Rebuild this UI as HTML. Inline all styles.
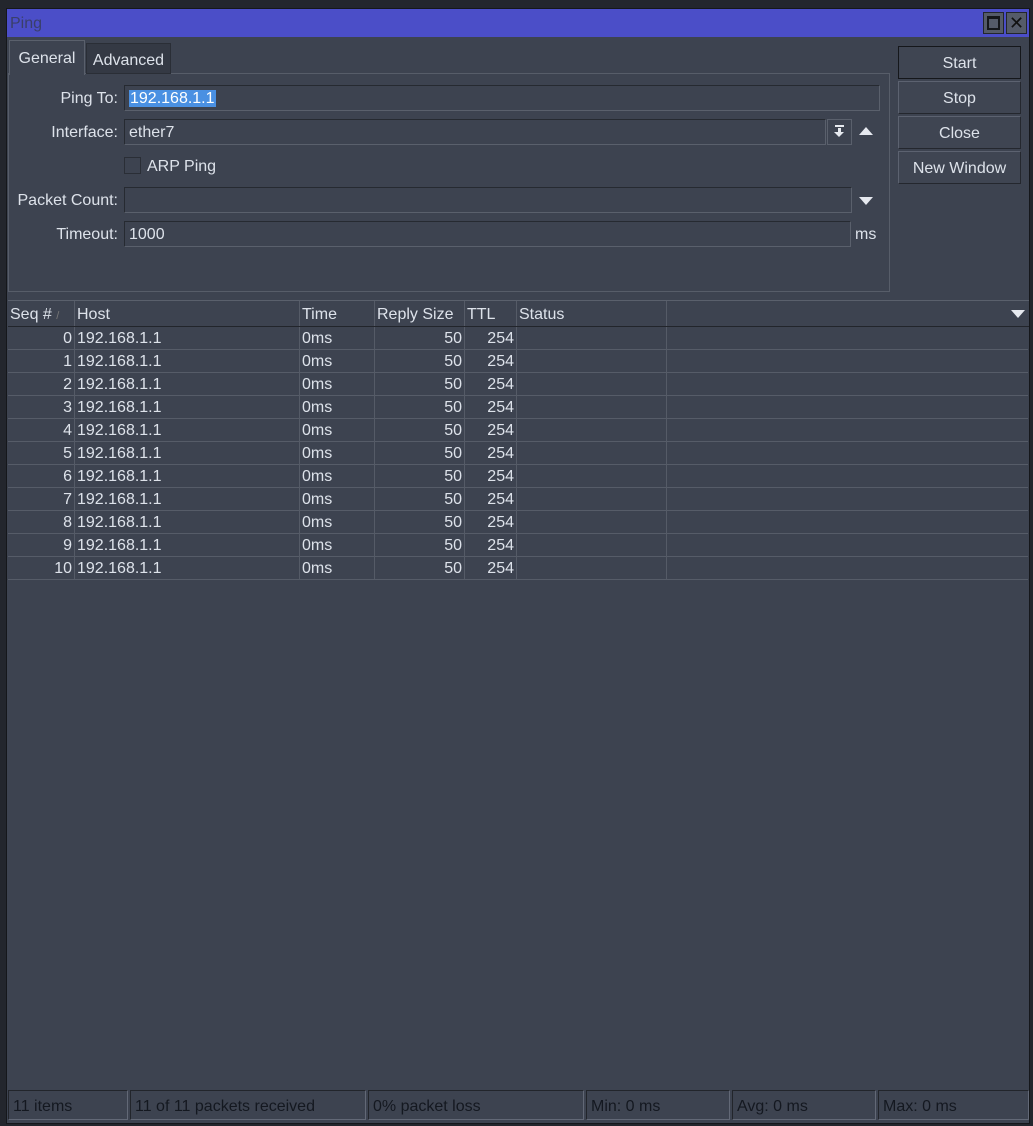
<html><head><style>
body{margin:0;width:1033px;height:1126px;background:#23262d;font-family:"Liberation Sans",sans-serif;font-size:16px;color:#dde2ea;position:relative;overflow:hidden}
.a{position:absolute;box-sizing:border-box}
.win{left:6px;top:8px;width:1024px;height:1116px;background:#3d4350;border:1px solid #15171b}
.inp{background:#3d4350;border:1px solid #5a606c;border-top-color:#262a31;border-left-color:#262a31;height:26px;line-height:26px;padding-left:4px}
.btn{border:1px solid #5c6270;border-right-color:#24272e;border-bottom-color:#24272e;background:#3f4552;text-align:center;line-height:33px;height:33px;width:123px;left:898px}
.lbl{text-align:right;width:110px;left:8px;line-height:28px}
.c{position:absolute;top:0;height:23px;line-height:24px;border-right:1px solid #555b67;box-sizing:border-box;padding:0 2px;white-space:nowrap}
.row{position:absolute;left:8px;width:1020px;height:23px;border-bottom:1px solid #565c68;box-sizing:border-box}
.sb{top:1090px;height:30px;border:1px solid #626876;border-top-color:#22252b;border-left-color:#22252b;color:#141820;line-height:31px;padding-left:4px}
</style></head><body>
<div class="a win"></div>
<div class="a" style="left:7px;top:9px;width:1022px;height:28px;background:#4b4ec8"></div>
<div class="a" style="left:10px;top:15px;color:#3a3f6a;font-size:16px">Ping</div>
<div class="a" style="left:983px;top:12px;width:21px;height:22px;border:1px solid #23262d;background:#555b69"><div class="a" style="left:3px;top:3px;width:13px;height:14px;border:2px solid #15171b;border-top-width:3px"></div></div>
<div class="a" style="left:1006px;top:12px;width:21px;height:22px;border:1px solid #23262d;background:#555b69;color:#111;font-size:18px;line-height:20px;text-align:center">✕</div>
<div class="a" style="left:8px;top:73px;width:882px;height:219px;border:1px solid #575d69;border-top-color:#575d69"></div>
<div class="a" style="left:9px;top:40px;width:76px;height:35px;background:#3d4350;border:1px solid #5a606c;border-bottom:none;line-height:36px;text-align:center">General</div>
<div class="a" style="left:86px;top:43px;width:85px;height:31px;background:#343944;border:1px solid #2a2e36;line-height:33px;text-align:center">Advanced</div>
<div class="a lbl" style="top:85px">Ping To:</div>
<div class="a inp" style="left:124px;top:85px;width:756px"><span style="background:#4a90e2;color:#fff;padding:0 1px">192.168.1.1</span></div>
<div class="a lbl" style="top:119px">Interface:</div>
<div class="a inp" style="left:124px;top:119px;width:702px">ether7</div>
<div class="a" style="left:827px;top:119px;width:25px;height:26px;border:1px solid #5a606c"><div class="a" style="left:7px;top:5px;width:9px;height:2px;background:#e6e9ef"></div><div class="a" style="left:10px;top:8px;width:3px;height:4px;background:#e6e9ef"></div><div class="a" style="left:6px;top:12px;width:0;height:0;border:5px solid transparent;border-top:5px solid #e6e9ef;border-bottom:none"></div></div>
<div class="a" style="left:859px;top:127px;width:0;height:0;border:7px solid transparent;border-bottom:8px solid #e6e9ef;border-top:none"></div>
<div class="a" style="left:124px;top:157px;width:17px;height:17px;border:1px solid #2a2e36;background:#3d4350"></div>
<div class="a" style="left:147px;top:155px;line-height:24px">ARP Ping</div>
<div class="a lbl" style="top:187px">Packet Count:</div>
<div class="a inp" style="left:124px;top:187px;width:728px"></div>
<div class="a" style="left:859px;top:197px;width:0;height:0;border:7px solid transparent;border-top:8px solid #e6e9ef;border-bottom:none"></div>
<div class="a lbl" style="top:221px">Timeout:</div>
<div class="a inp" style="left:124px;top:221px;width:727px">1000</div>
<div class="a" style="left:855px;top:221px;line-height:28px">ms</div>
<div class="a btn" style="top:46px;border:1px solid #15171b">Start</div>
<div class="a btn" style="top:81px">Stop</div>
<div class="a btn" style="top:116px">Close</div>
<div class="a btn" style="top:151px">New Window</div>
<div class="a" style="left:8px;top:300px;width:1021px;height:27px;border-top:1px solid #5a606c;border-bottom:1px solid #22252b;background:#3d4350">
<div class="c" style="left:0;width:67px;height:25px;line-height:28px">Seq # <span style="color:#777;font-size:11px">/</span></div>
<div class="c" style="left:67px;width:225px;height:25px;line-height:28px">Host</div>
<div class="c" style="left:292px;width:75px;height:25px;line-height:28px">Time</div>
<div class="c" style="left:367px;width:90px;height:25px;line-height:28px">Reply Size</div>
<div class="c" style="left:457px;width:52px;height:25px;line-height:28px">TTL</div>
<div class="c" style="left:509px;width:150px;height:25px;line-height:28px">Status</div>
<div class="a" style="left:1003px;top:9px;width:0;height:0;border:7px solid transparent;border-top:8px solid #e6e9ef;border-bottom:none"></div>
</div>
<div id="rows"></div>
<script>
var h='';for(var i=0;i<11;i++){h+='<div class="row" style="top:'+(327+i*23)+'px"><div class="c" style="left:0;width:67px;text-align:right">'+i+'</div><div class="c" style="left:67px;width:225px">192.168.1.1</div><div class="c" style="left:292px;width:75px">0ms</div><div class="c" style="left:367px;width:90px;text-align:right">50</div><div class="c" style="left:457px;width:52px;text-align:right">254</div><div class="c" style="left:509px;width:150px"></div></div>';}
document.getElementById('rows').innerHTML=h;
</script>
<div class="a sb" style="left:8px;width:120px">11 items</div>
<div class="a sb" style="left:130px;width:236px">11 of 11 packets received</div>
<div class="a sb" style="left:368px;width:216px">0% packet loss</div>
<div class="a sb" style="left:586px;width:144px">Min: 0 ms</div>
<div class="a sb" style="left:732px;width:144px">Avg: 0 ms</div>
<div class="a sb" style="left:878px;width:151px">Max: 0 ms</div>
</body></html>
